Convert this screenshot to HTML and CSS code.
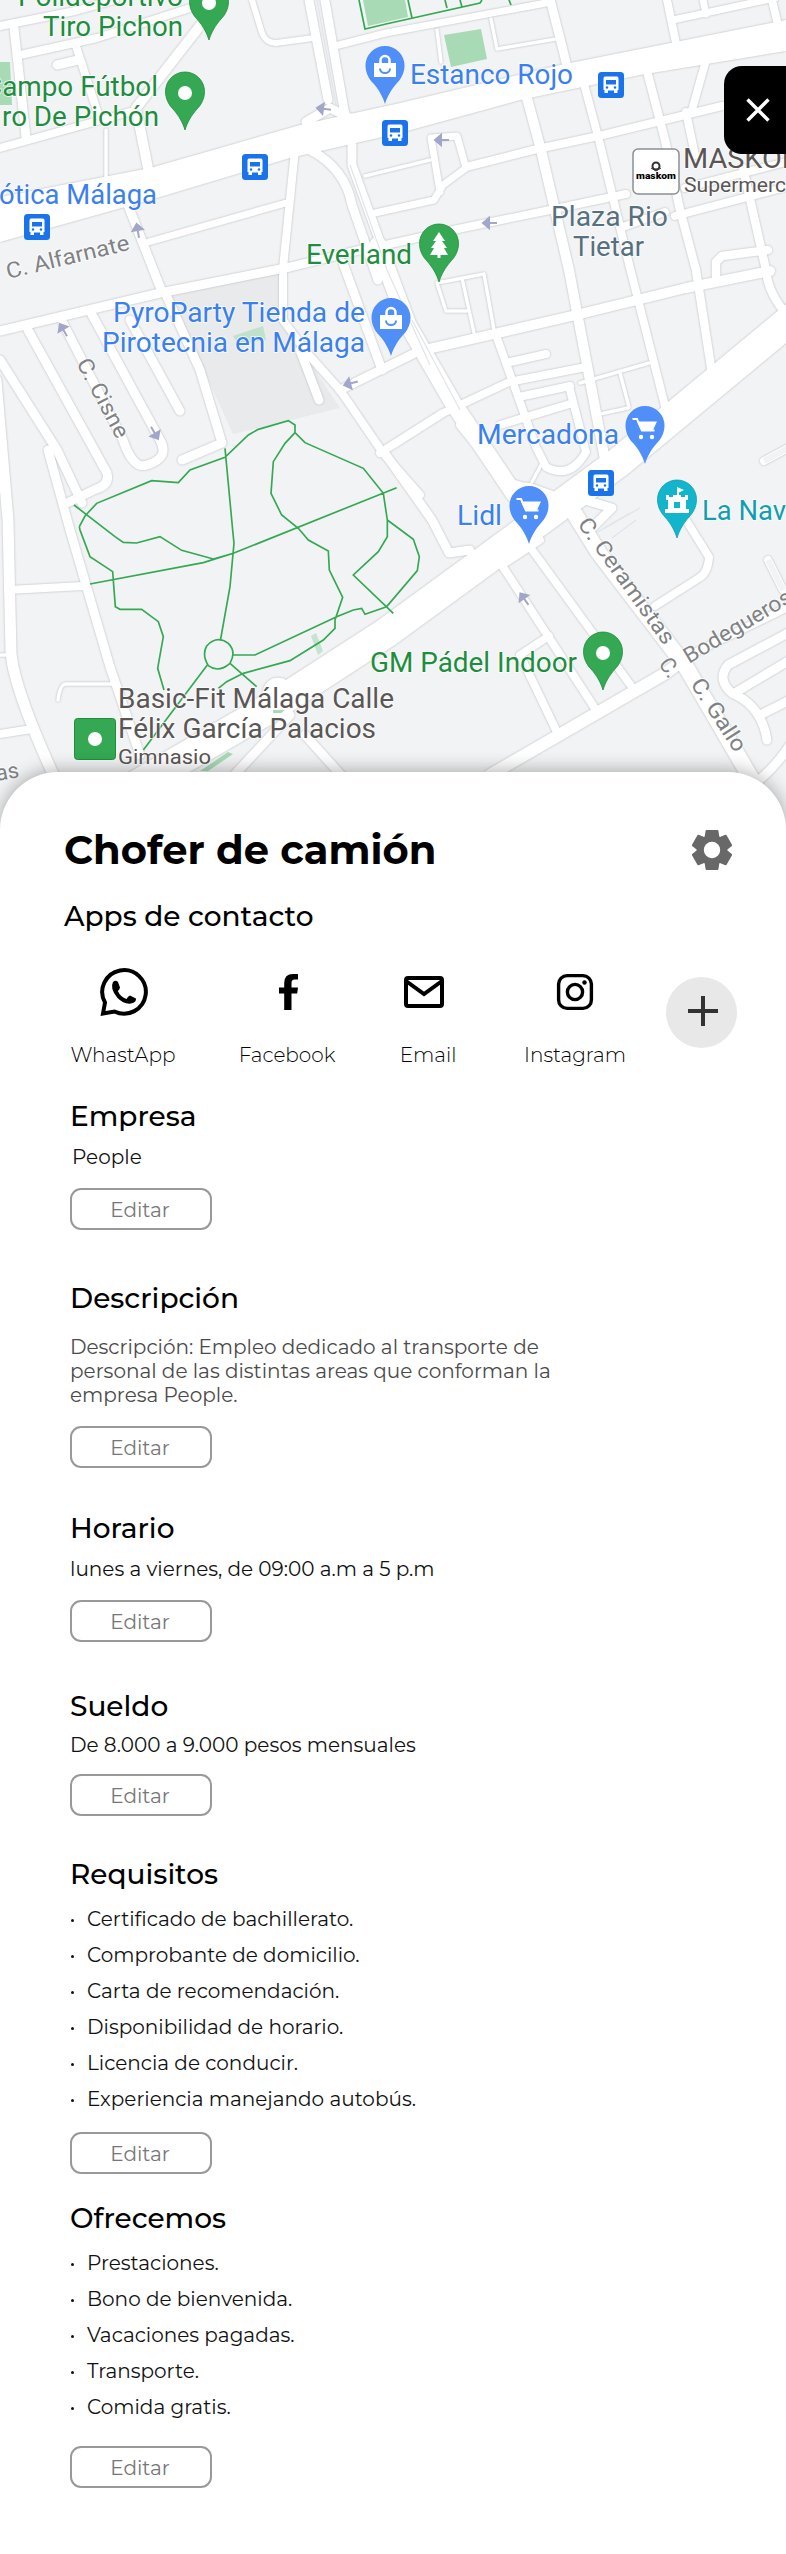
FILE: index.html
```html
<!DOCTYPE html>
<html lang="es">
<head>
<meta charset="utf-8">
<title>Chofer de camión</title>
<link rel="stylesheet" href="styles.css">
</head>
<body>
<div class="map">
<svg class="map-art" width="786" height="840" viewBox="0 0 786 840">
  <defs>
    <path id="pin" d="M0 0C-2.5-8-6-14-12-21C-16-25-19.500-31-19.500-38.500A19.500 19.500 0 0 1 19.500-38.500C19.500-31 16-25 12-21C6-14 2.500-8 0 0Z"/>
    <g id="bus"><rect width="26" height="26" rx="3.500" fill="#1a73e8"/><path fill="#fff" d="M7 4.500h12q1.500 0 1.500 2v11.500h-1v3h-3.500v-2.500h-6v2.500h-3.500v-3h-1v-11.500q0-2 1.500-2z"/><path fill="#1a73e8" d="M8 8h10v4.500h-10z"/><circle cx="9" cy="15.500" r="1.200" fill="#1a73e8"/><circle cx="17" cy="15.500" r="1.200" fill="#1a73e8"/></g>
    <g id="bag"><use href="#pin" fill="#4f8ff7"/><path d="M-11-41h22v14h-22z" fill="#fff"/><path d="M-4.500-40.500v-3a4.500 4.500 0 0 1 9 0v3" fill="none" stroke="#fff" stroke-width="2.500"/><path d="M-5-35.500a5 4.500 0 0 0 10 0" fill="none" stroke="#4f8ff7" stroke-width="2"/></g>
    <g id="cart"><use href="#pin" fill="#4f8ff7"/><path d="M-12.500-45h4.500l5 11.500h12.500" fill="none" stroke="#fff" stroke-width="2"/><path d="M-8-42.500h20l-4 8.500h-12z" fill="#fff"/><circle cx="-4" cy="-27" r="2.200" fill="#fff"/><circle cx="7" cy="-27" r="2.200" fill="#fff"/></g>
    <g id="dot"><use href="#pin" fill="#34a853" stroke="#1e8e3e" stroke-width=".8"/><circle cy="-37" r="7" fill="#fff"/></g>
    <path id="way" d="M-8 0h14M-8 0l6-5v10z" fill="#a3a6cb" stroke="#a3a6cb" stroke-width="2"/>
  </defs>
  <rect width="786" height="840" fill="#f1f3f4"/>
  <path d="M170 296L282 273L287 327L340 408L233 434Z" fill="#e8eaeb"/>
  <g fill="#a8dab5"><path d="M0 62h10l2 43h-12zM363 0h42l3 17l-40 9zM444 35l37-6l6 30l-36 8z"/><path opacity=".6" d="M233 336l30-10l3 14l-28 4zM311 636l5-3l7 18l-5 4z"/></g>

  <g class="roads">
    <path stroke-width="8" d="M0 26L75 11L115 0M20 55L97 38L190 8M75 43L100 120M0 148L130 112"/>
    <path stroke-width="9" d="M14 28L26 137M57 65L78 60M308-5L328 100M324-5L345 115"/>
    <path stroke-width="10" d="M203 22L136 108L150 178"/>
    <path stroke-width="6" d="M252 0L262 33Q266 43 276 43L313 38"/>
    <path stroke-width="3.500" d="M106 130V190M437 30L441 62M491 19L497 49L556 39M365 176L430 160"/>
    <path stroke-width="7" d="M335 46L386 33L546 3M145 243L286 203M375 213L434 200L443 185L466 168L457 136L431 138L440 192M673 20L775-2M703 0L706 14"/>
    <path stroke-width="8" d="M295 150L283 268V320L307 353L340 390L383 453L420 495M666-5L677 48M772 0L778 25M466 167L533 150L603 135L722 106"/>
    <path stroke-width="9" d="M128 205L162 292M549-5L568 70M306 122L330 108L350 118M310 150Q345 168 352 205L378 280M352 145L352 165L392 275"/>
    <path fill="#fff" stroke="none" d="M0 197L150 168L300 125L400 103L560 65L786 20V51L640 75L520 100L400 133L290 158L150 200L0 242Z"/>
    <path stroke-width="8" d="M372 248L453 230L550 210L626 194M675 216L786 187M620 228L665 212M685 188L786 162M583 80L599 140L628 260L666 410M706 60L692 110M686 112L695 155"/>
    <path stroke-width="10" d="M527 98L541 150L569 270L605 460M424 350L576 315L686 288L770 271"/>
    <path stroke-width="8.500" d="M648 75L665 140L680 210L696 270L713 380M743 168L766 270Q768 295 790 318M716 276L716 262L722 256L768 250"/>
    <path stroke-width="17" d="M378 245L408 325L453 403L515 495"/>
    <path stroke-width="8" d="M460 425L496 470Q508 486 530 487L555 496M500 480L528 520"/>
    <path stroke-width="30" d="M800 312L619 462L520 535L386 633L270 708L120 795"/>
    <path stroke-width="9" d="M0 331L160 293L290 267L360 250M28 330L107 473Q110 485 96 489L65 504M63 323L123 440Q133 470 147 465Q170 458 160 440L90 311M130 320L180 411"/>
    <path stroke-width="9" d="M167 297L200 370L222 443L182 460M0 360L57 450L82 503M48 450L70 530L110 667L140 755M300 350L319 400M343 263L382 370M340 390L415 353"/>
    <path stroke-width="11" d="M-4 380L8 520L11 653Q14 690 58 785"/>
    <path stroke-width="8" d="M8 590L83 586M0 734L32 729M380 453L443 413L509 382L586 367M496 335L536 447L546 467Q570 480 586 452L569 386M506 363L546 354M519 397L570 386M500 425L573 403"/>
    <path stroke-width="3.500" d="M0 655H12M58 700Q60 684 66 684H113M580 383L649 363M620 373L629 407M600 414L628 408M437 283L484 274L494 330M462 278L474 333M437 283L446 311H468M541 465L532 482"/>
    <path stroke-width="9" d="M386 455L432 520L449 553L470 550M568 507L585 500L612 508L590 530"/>
    <path stroke-width="8" d="M530 547L632 687M503 567L596 710M556 730L520 655L549 636M505 563L540 540"/>
    <path stroke-width="12" d="M490 775L666 673L690 655"/>
    <path stroke-width="8" d="M690 655L790 606M686 520L709 557Q708 573 699 578L655 606"/>
    <path stroke-width="16" d="M566 500L599 553L686 667L755 785"/>
    <path stroke-width="9" d="M790 632L728 665Q716 680 733 694L790 660M736 695Q762 708 767 740M762 714L790 700M225 785L290 715M305 735L350 785M745 790Q770 775 790 745"/>
    <path stroke-width="8" d="M764 461L790 447M768 560L783 590"/>
    <circle cx="278" cy="693" r="15" fill="#fff"/>
  </g>
  <g fill="none" stroke="#f1f3f4" stroke-width="6"><path d="M764 461L790 447M768 560L783 590"/></g>
  <g fill="none" stroke="#e2e4e7" stroke-width="1.200"><path d="M317 0L336 105M350 165L387 270L430 365M412 320L460 410M604 528L630 513M612 538L636 520M598 532L640 508"/></g>

  <g class="walks">
    <path d="M359 0L365 29L386 24L480 3L482 0M408 0L412 18M445 0L447 8M460 0L462 7M509 0L511 5"/>
    <g transform="translate(0 260) scale(.33333)"><path d="M222 735L345 830L370 847L410 849L480 830L545 871L640 897L700 880M238 800L255 768L290 730L455 662L535 668L570 630L675 592L745 525L775 508L865 482L885 495V518L915 548L1090 625L1150 700L1162 780V830L1135 875L1060 945L1180 1060M675 565L698 810L702 850L690 980L662 1137M885 518L855 550L820 605L813 700L845 765L895 805L925 840L985 873L988 930L1028 1012L1005 1080V1105L970 1140L870 1202L730 1240L680 1265L655 1285M270 972L610 908L700 880L1190 683M1162 780L1240 838L1258 890L1252 932L1160 1040M238 800L240 810L270 890L338 935L346 1040L360 1048H425L475 1085L490 1130L473 1225L492 1290M700 1185H765L1010 1070L1060 1050L1085 1045L1095 1063L1160 1040M622 1215L430 1470M690 1210L770 1280M625 1217Q605 1185 620 1158Q650 1125 685 1150Q710 1175 690 1210Q655 1240 625 1217"/></g>
  </g>
  <g fill="#a8dab5"><path d="M200 771L228 752L233 754L208 771zM273 710h12l-4 3h-8z"/></g>

  <use href="#way" transform="translate(325 109) rotate(8)"/><use href="#way" transform="translate(138 232) rotate(80)"/>
  <use href="#way" transform="translate(443 140)"/><use href="#way" transform="translate(491 223)"/>
  <use href="#way" transform="translate(64 331) rotate(60)"/><use href="#way" transform="translate(154 432) rotate(240)"/>
  <use href="#way" transform="translate(352 383) rotate(-15)"/><use href="#way" transform="translate(525 600) rotate(55)"/>

  <use href="#dot" x="209" y="40"/><use href="#dot" x="185" y="130"/><use href="#dot" x="603" y="690"/>
  <use href="#bag" x="385" y="104"/><use href="#bag" x="391" y="356"/>
  <use href="#cart" x="645" y="464"/><use href="#cart" x="529" y="544"/>
  <use href="#bus" x="242" y="154"/><use href="#bus" x="24" y="214"/><use href="#bus" x="382" y="120"/><use href="#bus" x="598" y="72"/><use href="#bus" x="588" y="470"/>
  <g transform="translate(439 282)"><use href="#pin" fill="#34a853" stroke="#1e8e3e" stroke-width=".8"/><path fill="#fff" d="M0-50l6 9h-3l5 7h-3l4 7h-7.500v3h-3v-3H-9l4-7h-3l5-7h-3z"/></g>
  <g transform="translate(677 538)"><use href="#pin" fill="#12b5cb" stroke="#129eaf" stroke-width=".8"/><path fill="#fff" d="M-11-43h3v2h4v-2h8v2h4v-2h3v5h-2v9h3v4H-12v-4h3v-9h-2zM0-51l7 3l-5 2.500v4h-2z"/><path fill="#12b5cb" d="M-3-36h6v6h-6z"/></g>
  <rect x="74.500" y="718.500" width="41" height="41" rx="3" fill="#34a853" stroke="#1e8e3e"/><circle cx="95" cy="739" r="7" fill="#fff"/>
  <rect x="633" y="149" width="46" height="45" rx="5" fill="#fff" stroke="#8b8f94" stroke-width="1.500"/>
  <text x="636" y="179" font-size="9" font-weight="900" textLength="40" lengthAdjust="spacingAndGlyphs">maskom</text>
  <circle cx="656" cy="166" r="3.500" fill="none" stroke="#333" stroke-width="2"/><path d="M651 168l5 3l5-3" fill="none" stroke="#333"/>

  <g class="labels">
    <g fill="#1e8e3e">
      <text x="18" y="6" textLength="165" lengthAdjust="spacingAndGlyphs">Polideportivo</text><text x="43" y="36" textLength="140" lengthAdjust="spacingAndGlyphs">Tiro Pichon</text>
      <text x="-16" y="96" textLength="174" lengthAdjust="spacingAndGlyphs">Campo Fútbol</text><text x="2" y="126" textLength="157" lengthAdjust="spacingAndGlyphs">ro De Pichón</text>
      <text x="306" y="264" textLength="106" lengthAdjust="spacingAndGlyphs">Everland</text><text x="370" y="672" textLength="207" lengthAdjust="spacingAndGlyphs">GM Pádel Indoor</text>
    </g>
    <g fill="#3a80ee">
      <text x="-1" y="204" textLength="158" lengthAdjust="spacingAndGlyphs">ótica Málaga</text><text x="410" y="84" textLength="163" lengthAdjust="spacingAndGlyphs">Estanco Rojo</text>
      <text x="113" y="322" textLength="252" lengthAdjust="spacingAndGlyphs">PyroParty Tienda de</text><text x="102" y="352" textLength="263" lengthAdjust="spacingAndGlyphs">Pirotecnia en Málaga</text>
      <text x="477" y="444" textLength="142" lengthAdjust="spacingAndGlyphs">Mercadona</text><text x="457" y="525" textLength="45" lengthAdjust="spacingAndGlyphs">Lidl</text>
    </g>
    <g fill="#56707e"><text x="551" y="226" textLength="117" lengthAdjust="spacingAndGlyphs">Plaza Rio</text><text x="573" y="256" textLength="71" lengthAdjust="spacingAndGlyphs">Tietar</text></g>
    <text x="702" y="520" textLength="84" lengthAdjust="spacingAndGlyphs" fill="#129eaf">La Nav</text>
    <g fill="#5a5655"><text x="683" y="168" textLength="124" lengthAdjust="spacingAndGlyphs">MASKOM</text><text x="684" y="192" font-size="20" textLength="102" lengthAdjust="spacingAndGlyphs">Supermerc</text>
      <text x="118" y="708" textLength="276" lengthAdjust="spacingAndGlyphs">Basic-Fit Málaga Calle</text><text x="118" y="738" textLength="258" lengthAdjust="spacingAndGlyphs">Félix García Palacios</text><text x="118" y="764" font-size="21" textLength="93" lengthAdjust="spacingAndGlyphs">Gimnasio</text></g>
    <g fill="#808285" font-size="22">
      <text transform="translate(8 279) rotate(-13.500)" textLength="126" lengthAdjust="spacingAndGlyphs">C. Alfarnate</text>
      <text transform="translate(76 363) rotate(62)" textLength="87" lengthAdjust="spacingAndGlyphs">C. Cisne</text>
      <text transform="translate(577 524) rotate(54.500)" textLength="150" lengthAdjust="spacingAndGlyphs">C. Ceramistas</text>
      <text transform="translate(689 664) rotate(-31)" textLength="122" lengthAdjust="spacingAndGlyphs">Bodegueros</text>
      <text transform="translate(658 664) rotate(55)" textLength="19" lengthAdjust="spacingAndGlyphs">C.</text>
      <text transform="translate(690 684) rotate(57)" textLength="83" lengthAdjust="spacingAndGlyphs">C. Gallo</text>
      <text transform="translate(-3 781) rotate(-10)">as</text>
    </g>
  </g>
</svg>
<button class="close" aria-label="Cerrar"><svg width="24" height="24" viewBox="0 0 24 24"><path d="M1.500 1.500l21 21M22.500 1.500l-21 21" stroke="#fff" stroke-width="3.400"/></svg></button>
</div>

<main class="sheet">
  <header class="top">
    <h1 class="title">Chofer de camión</h1>
    <svg width="40" height="40" viewBox="-20 -20 40 40"><defs><path id="tooth" d="M-5.500-20h11q.8 0 .9.800l1.100 7.200h-15l1.100-7.200q.1-.8.900-.8z"/><mask id="hub"><rect x="-20" y="-20" width="40" height="40" fill="#fff"/><circle r="8.200" fill="#000"/></mask></defs><g fill="#686868" mask="url(#hub)"><circle r="15.300"/><use href="#tooth"/><use href="#tooth" transform="rotate(60)"/><use href="#tooth" transform="rotate(120)"/><use href="#tooth" transform="rotate(180)"/><use href="#tooth" transform="rotate(240)"/><use href="#tooth" transform="rotate(300)"/></g></svg>
  </header>
  <h2 class="apps-title">Apps de contacto</h2>
  <div class="apps">
    <div class="app wa"><svg width="48" height="48" viewBox="0 0 48 48"><path d="M5 34.500A21.800 21.800 0 1 1 14.500 43.500L3 45.500Z" fill="none" stroke="#000" stroke-width="4"/><path d="M13 14Q15.500 11.500 18 14L20 19.500Q19.500 21.500 17.800 23Q20.500 29 26.500 31Q28 28 30 27.500L36 30.500Q36.500 34.500 31 35.500Q24 36.500 17.500 30Q9.500 20.500 13 14Z"/></svg><span>WhastApp</span></div>
    <div class="app fb"><svg width="48" height="48" viewBox="0 0 48 48"><path d="M17.200 42V25.500H12v-6h5.200v-4.500Q17.200 6 26 6h5v5.500h-3.500q-3 0-3 3.500v4.500H31l-.8 6h-5.700V42z"/></svg><span>Facebook</span></div>
    <div class="app em"><svg width="48" height="48" viewBox="0 0 48 48"><rect x="6" y="10" width="36" height="28" rx="2" fill="none" stroke="#000" stroke-width="4"/><path d="M6 13L24 26L42 13" fill="none" stroke="#000" stroke-width="4"/></svg><span>Email</span></div>
    <div class="app ig"><svg width="48" height="48" viewBox="0 0 48 48"><rect x="7.600" y="7.600" width="32.800" height="32.800" rx="8.500" fill="none" stroke="#000" stroke-width="3.400"/><circle cx="24" cy="24" r="7.600" fill="none" stroke="#000" stroke-width="3.400"/><circle cx="33.500" cy="14.500" r="2.200"/></svg><span>Instagram</span></div>
    <button class="add" aria-label="Añadir"><svg width="30" height="30" viewBox="0 0 30 30"><path d="M0 15h30M15 0v30" stroke="#333" stroke-width="4"/></svg></button>
  </div>

  <section class="block empresa"><h2>Empresa</h2><p>People</p><button class="edit">Editar</button></section>
  <section class="block descripcion"><h2>Descripción</h2><p>Descripción: Empleo dedicado al transporte de<br>personal de las distintas areas que conforman la<br>empresa People.</p><button class="edit">Editar</button></section>
  <section class="block horario"><h2>Horario</h2><p>lunes a viernes, de 09:00 a.m a 5 p.m</p><button class="edit">Editar</button></section>
  <section class="block sueldo"><h2>Sueldo</h2><p>De 8.000 a 9.000 pesos mensuales</p><button class="edit">Editar</button></section>
  <section class="block requisitos"><h2>Requisitos</h2>
    <ul><li>Certificado de bachillerato.</li><li>Comprobante de domicilio.</li><li>Carta de recomendación.</li><li>Disponibilidad de horario.</li><li>Licencia de conducir.</li><li>Experiencia manejando autobús.</li></ul>
    <button class="edit">Editar</button></section>
  <section class="block ofrecemos"><h2>Ofrecemos</h2>
    <ul><li>Prestaciones.</li><li>Bono de bienvenida.</li><li>Vacaciones pagadas.</li><li>Transporte.</li><li>Comida gratis.</li></ul>
    <button class="edit">Editar</button></section>
</main>
</body>
</html>
```
FILE: styles.css
```css
* { box-sizing: border-box; }
body { margin: 0; width: 786px; background: #fff; color: #000; font-family: Montserrat, Inter, sans-serif; }
h1, h2, p, ul { margin: 0; padding: 0; }
button { font-family: inherit; padding: 0; border: 0; display: flex; align-items: center; justify-content: center; }
svg { display: block; }

.map { position: relative; height: 772px; }
.map-art { font-family: Roboto, sans-serif; }
.roads { fill: none; stroke: #fff; stroke-linejoin: round; stroke-linecap: round; filter: drop-shadow(0 0 .8px #b4b6ba); }
.walks { fill: none; stroke: #34a853; stroke-width: 1.7; }
.walks g { stroke-width: 5; }
.labels { font-size: 28px; stroke: rgba(255, 255, 255, .7); stroke-width: 2px; paint-order: stroke; }
.labels text { white-space: pre; }
.close { position: absolute; top: 66px; right: 0; width: 62px; height: 88px; padding-left: 6px; background: #000; border-radius: 18px 0 0 18px; }

.sheet { position: relative; height: 1782px; padding: 55px 0 0 64px; background: #fff; border-radius: 58px 58px 0 0; box-shadow: 0 -2px 18px rgba(0, 0, 0, .3); }
.top { display: flex; align-items: center; justify-content: space-between; height: 46px; padding-right: 54px; }
.title { font-size: 40px; line-height: 44px; font-weight: 700; }
.apps-title { margin-top: 26px; font-size: 28px; line-height: 34px; font-weight: 500; }

.apps { display: flex; align-items: flex-start; margin-top: 35px; padding-left: 6px; height: 99px; }
.app { display: flex; flex-direction: column; align-items: center; gap: 27px; width: 106px; font-size: 20px; line-height: 24px; font-weight: 300; white-space: nowrap; }
.fb { width: 98px; margin-left: 62px; }
.em { width: 56px; margin-left: 64px; }
.ig { width: 104px; margin-left: 67px; }
.wa svg { margin-left: 2px; }
.fb svg { margin-left: 7px; }
.em svg { margin-right: 8px; }
.add { width: 71px; height: 71px; margin: 9px 0 0 39px; padding-bottom: 3px; padding-left: 2px; border-radius: 50%; background: #e8e8e8; }

.block { margin-left: 6px; font-size: 20px; line-height: 24px; font-weight: 400; }
.block h2 { font-size: 28px; line-height: 34px; font-weight: 500; }
.edit { width: 142px; height: 42px; border: 2px solid #999; border-radius: 11px; background: #fff; color: #777; font-size: 20px; line-height: 24px; padding: 1px 2px 0 0; }
.empresa { margin-top: 32px; }
.empresa p { padding-left: 2px; }
.empresa p, .horario p { margin: 12px 0 19px; color: #111; }
.descripcion { margin-top: 51px; }
.descripcion p { margin: 20px 0 19px; color: #4a4a4a; }
.horario { margin-top: 43px; }
.sueldo { margin-top: 47px; }
.sueldo p { margin: 10px 0 17px; color: #111; }
.requisitos { margin-top: 41px; }
.block ul { margin: 10px 0 15px; list-style: none; color: #111; }
.block li { display: flex; align-items: center; gap: 13px; line-height: 36px; }
.block li::before { content: ""; width: 3px; height: 3px; margin-left: 1px; margin-top: 2px; border-radius: 50%; background: #111; }
.ofrecemos { margin-top: 27px; }
.ofrecemos ul { margin-bottom: 21px; }
```
